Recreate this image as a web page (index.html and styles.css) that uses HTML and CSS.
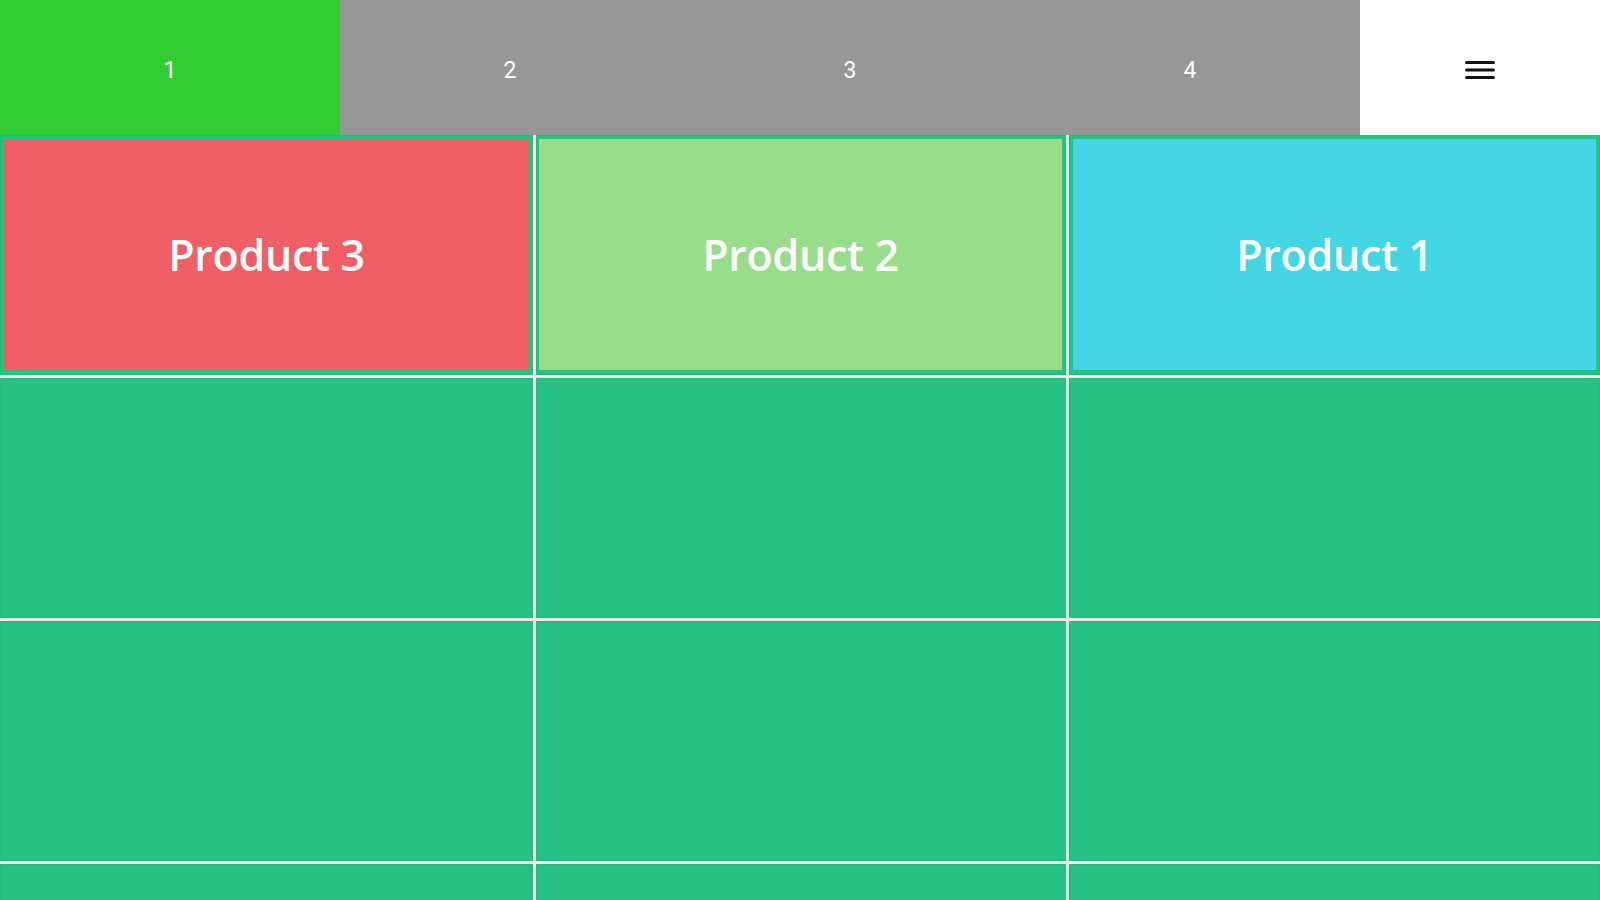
FILE: index.html
```html
<!DOCTYPE html>
<html>
<head>
<meta charset="utf-8">
<link rel="stylesheet" href="styles.css">
</head>
<body>
<nav class="tabs">
  <div class="tab tab-active">1</div>
  <div class="tab">2</div>
  <div class="tab">3</div>
  <div class="tab">4</div>
  <div class="tab tab-menu">
    <svg width="34" height="24" viewBox="0 0 34 24" aria-hidden="true">
      <rect x="2" y="3" width="30" height="3" rx="1.5" fill="#111"/>
      <rect x="2" y="10.5" width="30" height="3" rx="1.5" fill="#111"/>
      <rect x="2" y="18" width="30" height="3" rx="1.5" fill="#111"/>
    </svg>
  </div>
</nav>
<main class="grid">
  <div class="cell product-cell"><div class="product product-red">Product 3</div></div>
  <div class="cell product-cell"><div class="product product-green">Product 2</div></div>
  <div class="cell product-cell"><div class="product product-cyan">Product 1</div></div>
  <div class="cell"></div>
  <div class="cell"></div>
  <div class="cell"></div>
  <div class="cell"></div>
  <div class="cell"></div>
  <div class="cell"></div>
  <div class="cell"></div>
  <div class="cell"></div>
  <div class="cell"></div>
</main>
</body>
</html>
```
FILE: styles.css
```css
html, body {
  margin: 0;
  padding: 0;
  width: 1600px;
  height: 900px;
  overflow: hidden;
  background: #ececec;
  font-family: Roboto, "Noto Sans", sans-serif;
}

.tabs {
  display: grid;
  grid-template-columns: 340px 340px 340px 340px 240px;
  height: 135px;
}

.tab {
  display: flex;
  align-items: center;
  justify-content: center;
  background: #979797;
  color: #ffffff;
  font-size: 23px;
  padding-top: 6px;
  box-sizing: border-box;
}

.tab-active {
  background: #33cc33;
}

.tab-menu {
  background: #ffffff;
  padding-top: 4px;
}

.grid {
  display: grid;
  grid-template-columns: 533px 530px 531px;
  grid-auto-rows: 240px;
  column-gap: 3px;
  row-gap: 3px;
  background: #ececec;
}

.cell {
  background: #26c281;
  box-shadow: inset 0 0 0 1px #1fbd78;
}

.product-cell {
  padding: 4px 4px 5px 4px;
  box-sizing: border-box;
  display: flex;
}

.product-cell:nth-child(2) {
  padding-left: 3px;
}

.product {
  flex: 1;
  display: flex;
  align-items: center;
  justify-content: center;
  color: #ffffff;
  font-family: "Open Sans", "Noto Sans", sans-serif;
  font-weight: 600;
  font-size: 43px;
  letter-spacing: -0.3px;
  padding-top: 0;
}

.product-red { background: #f05f66; }
.product-green { background: #98dc8c; }
.product-cyan { background: #43d7e5; }
```
